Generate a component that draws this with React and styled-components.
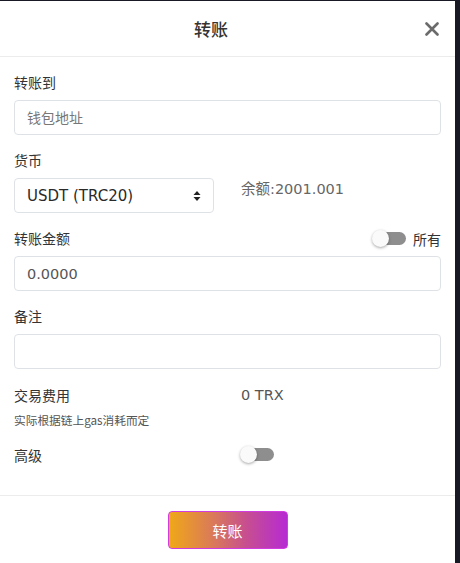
import React from "react";
import styled, { createGlobalStyle } from "styled-components";

const Global = createGlobalStyle`
  html, body { margin: 0; padding: 0; background: #191926; }
  body { font-family: "DejaVu Sans", "Noto Sans CJK SC", sans-serif; }
  * { box-sizing: border-box; }
`;

const Modal = styled.div`
  margin-top: 1px;
  width: 455px;
  height: 562px;
  background: #fff;
  display: flex;
  flex-direction: column;
`;

const Header = styled.div`
  height: 56px;
  border-bottom: 1px solid #ececec;
  display: flex;
  align-items: center;
`;

const Title = styled.div`
  flex: 1;
  text-align: center;
  font-family: "Noto Sans CJK SC", sans-serif;
  font-size: 17px;
  color: #333;
  font-weight: 500;
`;

const Close = styled.button`
  width: 19px;
  margin-right: 14px;
  height: 22px;
  border: none;
  background: none;
  padding: 0;
  display: flex;
  align-items: center;
  justify-content: center;
  cursor: pointer;
`;

const Body = styled.div`
  padding: 15px 14px 0;
  height: 439px;
  border-bottom: 1px solid #ececec;
`;

const Group = styled.div`
  margin-bottom: 15px;
`;

const LabelRow = styled.div`
  display: flex;
  align-items: center;
  justify-content: space-between;
  height: 21px;
  margin-bottom: 7px;
`;

const Label = styled.div`
  font-family: "Noto Sans CJK SC", sans-serif;
  font-size: 14px;
  color: #333;
  line-height: 21px;
`;

const Input = styled.input`
  width: 100%;
  height: 35px;
  border: 1px solid #dee2e6;
  border-radius: 4px;
  padding: 0 12px;
  font-family: "DejaVu Sans", "Noto Sans CJK SC", sans-serif;
  font-size: 14.5px;
  color: #555;
  outline: none;
  &::placeholder { color: #777; font-family: "Noto Sans CJK SC", sans-serif; font-size: 14px; }
`;

const SelectRow = styled.div`
  display: flex;
  align-items: flex-start;
`;

const Select = styled.div`
  width: 200px;
  height: 35px;
  border: 1px solid #dee2e6;
  border-radius: 4px;
  padding: 0 12px;
  display: flex;
  align-items: center;
  justify-content: space-between;
  font-size: 15px;
  color: #2a2a2a;
`;

const Side = styled.div`
  margin-left: 27px;
  padding-top: 1px;
  font-size: 14.5px;
  color: #666;
  line-height: 21px;
`;

const SwitchWrap = styled.div`
  display: flex;
  align-items: center;
  gap: 7px;
  font-family: "Noto Sans CJK SC", sans-serif;
  font-size: 14px;
  color: #333;
`;

const Track = styled.div`
  width: 33px;
  height: 13px;
  border-radius: 7px;
  background: #8e8e8e;
  position: relative;
`;

const Knob = styled.div`
  position: absolute;
  left: -1px;
  top: -2px;
  width: 17px;
  height: 17px;
  border-radius: 50%;
  background: #fafafa;
  box-shadow: 0 1px 3px rgba(0, 0, 0, 0.35);
`;

const Switch = () => (
  <Track>
    <Knob />
  </Track>
);

const InfoRow = styled.div`
  display: flex;
  align-items: center;
  height: 21px;
`;

const InfoLabel = styled.div`
  width: 227px;
  font-family: "Noto Sans CJK SC", sans-serif;
  font-size: 14px;
  color: #333;
`;

const InfoValue = styled.div`
  font-size: 14.5px;
  color: #555;
`;

const Hint = styled.div`
  font-family: "Noto Sans CJK SC", sans-serif;
  font-size: 11.7px;
  color: #555;
  margin-top: 6px;
  line-height: 17px;
`;

const AdvancedRow = styled.div`
  display: flex;
  align-items: center;
  height: 21px;
  margin-top: 16px;
`;

const Footer = styled.div`
  flex: 1;
  display: flex;
  justify-content: center;
  padding-top: 15px;
`;

const PrimaryButton = styled.button`
  width: 120px;
  height: 38px;
  border: 1px solid #d23be0;
  border-radius: 4px;
  background: linear-gradient(90deg, #f0a817 0%, #d8765e 40%, #c74f8f 65%, #b62bd2 100%);
  color: #fff;
  font-family: "Noto Sans CJK SC", sans-serif;
  font-size: 15px;
  cursor: pointer;
`;

export default function App() {
  return (
    <>
      <Global />
      <Modal>
        <Header>
          <Title>转账</Title>
          <Close aria-label="close">
            <svg width="14" height="14" viewBox="0 0 14 14">
              <path d="M1.5 1.5 L12.5 12.5 M12.5 1.5 L1.5 12.5" stroke="#6b6b6b" strokeWidth="2.6" strokeLinecap="round" />
            </svg>
          </Close>
        </Header>
        <Body>
          <Group>
            <LabelRow><Label>转账到</Label></LabelRow>
            <Input placeholder="钱包地址" />
          </Group>
          <Group>
            <LabelRow><Label>货币</Label></LabelRow>
            <SelectRow>
              <Select>
                <span>USDT (TRC20)</span>
                <svg width="8" height="12" viewBox="0 0 8 12">
                  <path d="M4 1 L7.5 5 L0.5 5 Z M4 11 L7.5 7 L0.5 7 Z" fill="#222" />
                </svg>
              </Select>
              <Side>余额:2001.001</Side>
            </SelectRow>
          </Group>
          <Group>
            <LabelRow>
              <Label>转账金额</Label>
              <SwitchWrap>
                <Switch />
                <span>所有</span>
              </SwitchWrap>
            </LabelRow>
            <Input defaultValue="0.0000" />
          </Group>
          <Group>
            <LabelRow><Label>备注</Label></LabelRow>
            <Input />
          </Group>
          <InfoRow>
            <InfoLabel>交易费用</InfoLabel>
            <InfoValue>0 TRX</InfoValue>
          </InfoRow>
          <Hint>实际根据链上gas消耗而定</Hint>
          <AdvancedRow>
            <InfoLabel>高级</InfoLabel>
            <Switch />
          </AdvancedRow>
        </Body>
        <Footer>
          <PrimaryButton>转账</PrimaryButton>
        </Footer>
      </Modal>
    </>
  );
}
